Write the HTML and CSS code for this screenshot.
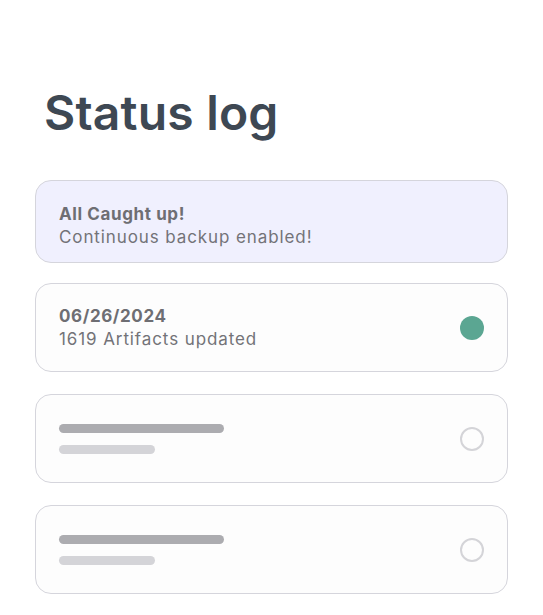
FILE: index.html
```html
<!DOCTYPE html>
<html lang="en">
<head>
<meta charset="utf-8">
<title>Status log</title>
<link rel="stylesheet" href="styles.css">
</head>
<body>
<main class="page">
  <h1 class="title">Status log</h1>
  <div class="banner">
    <div class="card-text">
      <div class="card-title">All Caught up!</div>
      <div class="card-sub">Continuous backup enabled!</div>
    </div>
  </div>
  <ul class="log">
    <li class="card">
      <div class="card-text">
        <div class="card-title">06/26/2024</div>
        <div class="card-sub">1619 Artifacts updated</div>
      </div>
      <span class="dot dot-done"></span>
    </li>
    <li class="card">
      <div class="skeleton">
        <span class="bar bar-dark"></span>
        <span class="bar bar-light"></span>
      </div>
      <span class="dot dot-empty"></span>
    </li>
    <li class="card">
      <div class="skeleton">
        <span class="bar bar-dark"></span>
        <span class="bar bar-light"></span>
      </div>
      <span class="dot dot-empty"></span>
    </li>
  </ul>
</main>
</body>
</html>
```
FILE: styles.css
```css
* { box-sizing: border-box; }
html, body { margin: 0; padding: 0; background: #ffffff; }
body { font-family: Inter, "Open Sans", sans-serif; }

.page {
  padding: 0 35px;
  width: 543px;
}

.title {
  margin: 0;
  padding: 84px 0 0 9px;
  height: 180px;
  font-size: 48px;
  line-height: 58px;
  font-weight: 600;
  color: #3e4853;
  letter-spacing: 0.2px;
}

.banner, .card {
  border: 1px solid #d5d5dc;
  border-radius: 16px;
  padding: 0 23px;
  display: flex;
  align-items: center;
  justify-content: space-between;
}

.banner {
  background: #f0f0fe;
  height: 83px;
  align-items: flex-start;
  padding-top: 22px;
}

.log {
  list-style: none;
  margin: 20px 0 0;
  padding: 0;
  display: flex;
  flex-direction: column;
  gap: 22px;
}

.card {
  background: #fdfdfd;
  height: 89px;
}

.card-text { display: flex; flex-direction: column; }

.card-title {
  font-size: 17px;
  line-height: 23px;
  font-weight: 700;
  color: #6e6e73;
  letter-spacing: 0.6px;
}

.card-sub {
  font-size: 17px;
  line-height: 23px;
  font-weight: 400;
  color: #737378;
  letter-spacing: 0.9px;
}

.dot {
  width: 24px;
  height: 24px;
  border-radius: 50%;
  flex: none;
}

.dot-done { background: #5ba692; }
.dot-empty { border: 2px solid #d4d4d8; background: transparent; }

.skeleton {
  display: flex;
  flex-direction: column;
  gap: 12px;
}

.bar {
  display: block;
  height: 9px;
  border-radius: 5px;
}

.bar-dark { width: 165px; background: #acacb0; }
.bar-light { width: 96px; background: #d4d4d8; }
```
